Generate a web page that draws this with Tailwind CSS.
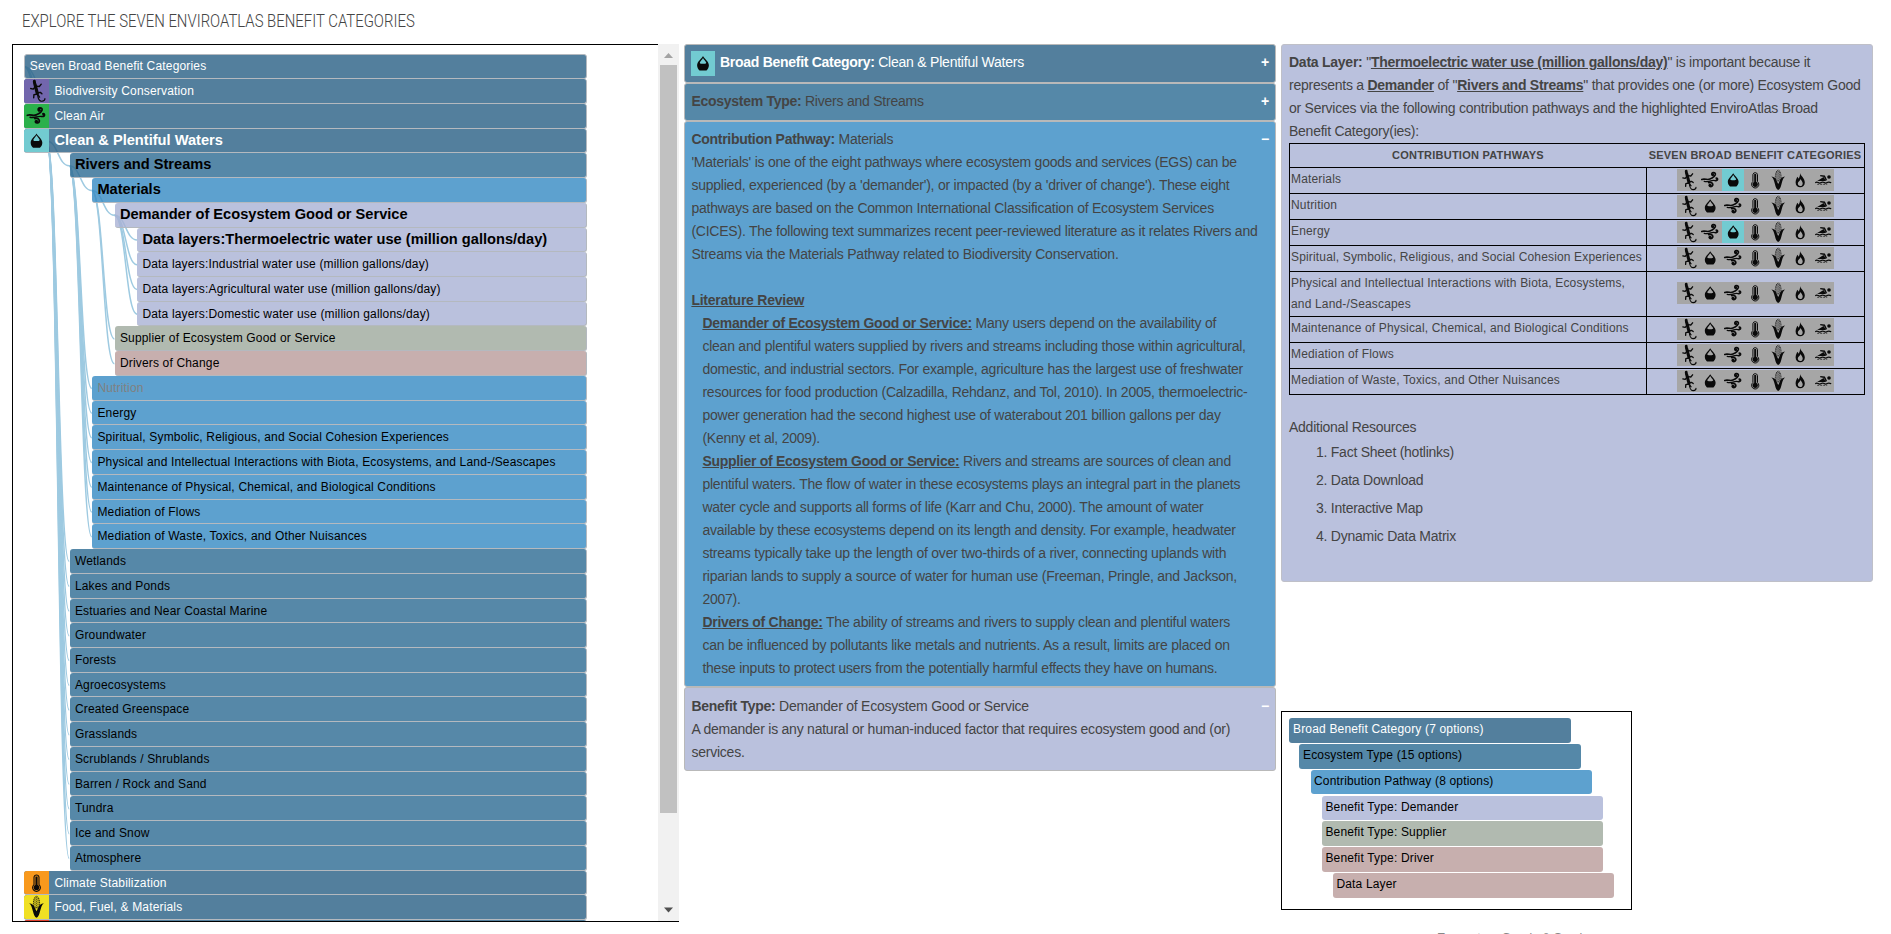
<!DOCTYPE html>
<html lang="en">
<head>
<meta charset="utf-8">
<title>EnviroAtlas Benefit Categories</title>
<script src="https://cdn.jsdelivr.net/npm/@tailwindcss/browser@4"></script>
</head>
<body class="bg-white w-[1891px] h-[934px] overflow-hidden font-['Liberation_Sans',Arial,sans-serif] text-[#444]">

<svg class="hidden">
  <symbol id="lizard" viewBox="0 0 22 22">
    <g fill="none" stroke="#0a0a0a" stroke-linecap="round" stroke-linejoin="round">
      <path d="M9 2.2L9.2 3.8" stroke-width="2.8"/>
      <path d="M9.6 5L11.8 13.5" stroke-width="3"/>
      <path d="M12 14.5C12.4 18 13.4 20.8 16 20.6C18 20.4 18.9 19.4 18.8 18.2" stroke-width="1.1"/>
      <path d="M10.5 6.6L13.6 7L15.4 4.8M9.6 7.4L8 9.4L5.6 8.8M12 12.6L14.6 12.4L16 13.6M11.4 14L8.6 14.6L8.4 17.4M12.6 15L13.8 16.8" stroke-width="1.3"/>
    </g>
  </symbol>
  <symbol id="wind" viewBox="0 0 22 22">
    <g fill="none" stroke="#0a0a0a" stroke-linecap="round">
      <path d="M2.5 10.5C6 9 9 12.2 12.5 9.2C16.5 7 17.6 4 14.2 3.6C12.8 3.6 12 5 13 6" stroke-width="1.6"/>
      <path d="M5 12.3C9 13.6 12 10.6 15.8 11.6C19.6 12.6 19 8 16.8 9" stroke-width="1.3"/>
      <path d="M9.5 13.6C13.8 12.6 15 16.8 12 17.6C9.8 17.8 9.4 15.8 10.8 15.6" stroke-width="1.6"/>
    </g>
    <circle cx="13.6" cy="5.8" r="1.4" fill="#0a0a0a"/><circle cx="17.5" cy="10" r="1.1" fill="#0a0a0a"/><circle cx="11.2" cy="16.3" r="1.4" fill="#0a0a0a"/>
  </symbol>
  <symbol id="drop" viewBox="0 0 22 22">
    <path fill="#0a0a0a" fill-rule="evenodd" d="M11 4.2C12 6.4 16.4 9.3 16.4 12.7C16.4 14.8 15.4 16.3 14.2 17.4H7.8C6.6 16.3 5.6 14.8 5.6 12.7C5.6 9.3 10 6.4 11 4.2ZM11 5.9C10.4 7.2 8.6 8.9 8 10.2C8.3 11.3 9.6 11.2 11 11.2C12.4 11.2 13.7 11.3 14 10.2C13.4 8.9 11.6 7.2 11 5.9Z"/>
  </symbol>
  <symbol id="therm" viewBox="0 0 22 22">
    <path d="M8.7 5.4A2.4 2.4 0 0 1 13.3 5.4V12.6A3.6 3.6 0 1 1 8.7 12.6Z" fill="none" stroke="#0a0a0a" stroke-width="1"/>
    <path d="M11 5V14" stroke="#0a0a0a" stroke-width="2"/><circle cx="11" cy="15.3" r="2.6" fill="#0a0a0a"/>
  </symbol>
  <symbol id="corn" viewBox="0 0 22 22">
    <path d="M8.3 12C7.6 6 8.8 1.2 11 1.2S14.4 6 13.7 12Z" fill="#0a0a0a" fill-opacity=".15" stroke="#0a0a0a" stroke-width=".7" stroke-dasharray="1.2 .6"/>
    <path d="M11 2V12M9.6 3V11M12.4 3V11" stroke="#0a0a0a" stroke-width=".5" stroke-dasharray="1 .8"/>
    <path fill="#0a0a0a" d="M4.2 7.6C7 8 8.6 9.4 9.4 11.8L11 15L12.6 11.8C13.4 9.4 15 8 17.8 7.6C15.6 9.4 15.2 12 14.3 15C13.6 18 12.6 20.6 11 21C9.4 20.6 8.4 18 7.7 15C6.8 12 6.4 9.4 4.2 7.6Z"/>
  </symbol>
  <symbol id="fire" viewBox="0 0 22 22">
    <path fill="#0a0a0a" fill-rule="evenodd" d="M10.8 4C11.2 6.6 15.6 9.2 15.6 13.4C15.6 16.2 13.6 18.2 11 18.2S6.4 16.2 6.4 13.4C6.4 11 7.6 9.4 8 7.8C8.8 8.4 9.2 9 9.3 9.8C10.4 8.4 11 6.2 10.8 4ZM11.4 10C11 11.6 8.6 12.8 8.6 14.6C8.6 16 9.6 17 11 17S13.5 16 13.5 14.4C13.5 12.6 11.8 11.6 11.4 10Z"/>
  </symbol>
  <symbol id="swim" viewBox="0 0 22 22">
    <circle cx="16.8" cy="8" r="1.8" fill="#0a0a0a"/>
    <path d="M8 6.6L12.2 7.2L14.2 11.4" fill="none" stroke="#0a0a0a" stroke-width="1.4"/>
    <path d="M5 12L11.4 8L13.8 12Z" fill="#0a0a0a"/>
    <path d="M3 13.8Q4.5 12.6 6 13.6T9 13.6T12 13.6T15 13.6T19 13.8" fill="none" stroke="#0a0a0a" stroke-width="1.2"/>
    <path d="M5 15.3H15" stroke="#0a0a0a" stroke-width=".7" stroke-dasharray="2 1"/>
  </symbol>
</svg>

<header class="h-[44px] pl-[22px] pt-[9px]">
  <h1 class="w-max origin-left scale-x-[0.852] whitespace-nowrap font-['Roboto'] font-light text-[17.5px] leading-6">EXPLORE THE SEVEN ENVIROATLAS BENEFIT CATEGORIES</h1>
</header>

<main class="flex items-start pl-[12px]">

  <!-- Tree of categories -->
  <section class="flex w-[667px] h-[878px] border-b border-black">
    <div class="relative w-[646px] h-[877px] overflow-hidden border-t border-l border-black pl-[11px] pt-[9.4px]">
      <svg id="links" class="absolute left-[-13px] top-[-45px] w-[640px] h-[960px]" fill="none" stroke="#9ecae1" stroke-width="1.5"></svg>
      <div id="tree" class="relative flex flex-col w-[563px]"></div>
    </div>
    <div class="flex flex-col items-center w-[21px] h-[877px] bg-[#f1f1f1]">
      <svg class="w-[21px] h-[21px] shrink-0" viewBox="0 0 21 21"><path d="M6 14L10.5 9L15 14Z" fill="#a3a3a3"/></svg>
      <div class="w-[17px] h-[748px] bg-[#c1c1c1]"></div>
      <svg class="mt-auto w-[21px] h-[21px] shrink-0" viewBox="0 0 21 21"><path d="M6 7.5L10.5 12.5L15 7.5Z" fill="#505050"/></svg>
    </div>
  </section>

  <!-- Selected path details -->
  <section class="ml-[5px] w-[592px] text-[14px] leading-[23px] tracking-[-0.23px]">
    <div class="flex h-[39px] rounded-[3px] border border-[#b9b9b9] bg-[#537f9d] text-white pl-[6.4px] pr-[6px] pt-[6px]">
      <svg class="w-[24px] h-[25px] bg-[#72cbd1] mr-[4.6px]"><use href="#drop"/></svg>
      <p><b class="tracking-[-0.28px]">Broad Benefit Category:</b> Clean &amp; Plentiful Waters</p>
      <b class="ml-auto">+</b>
    </div>
    <div class="flex justify-between h-[38px] rounded-[3px] border border-[#b9b9b9] bg-[#5588a8] pl-[6.4px] pr-[6px] pt-[6px]">
      <p><b class="tracking-[-0.28px]">Ecosystem Type:</b> Rivers and Streams</p><b class="text-white">+</b>
    </div>
    <div class="h-[566px] rounded-[3px] border border-[#b9b9b9] bg-[#5da1cf] pl-[6.4px] pr-[6px] pt-[6px] whitespace-nowrap">
      <div class="flex justify-between"><p><b class="tracking-[-0.28px]">Contribution Pathway:</b> Materials</p><b class="text-white">−</b></div>
      <p>'Materials' is one of the eight pathways where ecosystem goods and services (EGS) can be<br>supplied, experienced (by a 'demander'), or impacted (by a 'driver of change'). These eight<br>pathways are based on the Common International Classification of Ecosystem Services<br>(CICES). The following text summarizes recent peer-reviewed literature as it relates Rivers and<br>Streams via the Materials Pathway related to Biodiversity Conservation.</p>
      <p class="mt-[23px] font-bold underline">Literature Review</p>
      <div class="pl-[11px]">
        <p><b class="underline tracking-[-0.28px]">Demander of Ecosystem Good or Service:</b> Many users depend on the availability of<br>clean and plentiful waters supplied by rivers and streams including those within agricultural,<br>domestic, and industrial sectors. For example, agriculture has the largest use of freshwater<br>resources for food production (Calzadilla, Rehdanz, and Tol, 2010). In 2005, thermoelectric-<br>power generation had the second highest use of waterabout 201 billion gallons per day<br>(Kenny et al, 2009).</p>
        <p><b class="underline tracking-[-0.28px]">Supplier of Ecosystem Good or Service:</b> Rivers and streams are sources of clean and<br>plentiful waters. The flow of water in these ecosystems plays an integral part in the planets<br>water cycle and supports all forms of life (Karr and Chu, 2000). The amount of water<br>available by these ecosystems depend on its length and density. For example, headwater<br>streams typically take up the length of over two-thirds of a river, connecting uplands with<br>riparian lands to supply a source of water for human use (Freeman, Pringle, and Jackson,<br>2007).</p>
        <p><b class="underline tracking-[-0.28px]">Drivers of Change:</b> The ability of streams and rivers to supply clean and plentiful waters<br>can be influenced by pollutants like metals and nutrients. As a result, limits are placed on<br>these inputs to protect users from the potentially harmful effects they have on humans.</p>
      </div>
    </div>
    <div class="h-[84px] rounded-[3px] border border-[#b9b9b9] bg-[#bac1dd] pl-[6.4px] pr-[6px] pt-[7px]">
      <div class="flex justify-between"><p><b class="tracking-[-0.28px]">Benefit Type:</b> Demander of Ecosystem Good or Service</p><b class="text-white">−</b></div>
      <p>A demander is any natural or human-induced factor that requires ecosystem good and (or)<br>services.</p>
    </div>
  </section>

  <div class="ml-[5px] w-[592px]">
    <!-- Data layer -->
    <section class="h-[538px] rounded-[3px] border border-[#bfc0c8] bg-[#bac1dd] px-[7px] pt-[6px] text-[14px] leading-[23px] tracking-[-0.25px] whitespace-nowrap">
      <p><b>Data Layer:</b> "<b class="underline">Thermoelectric water use (million gallons/day)</b>" is important because it<br>represents a <b class="underline">Demander</b> of "<b class="underline">Rivers and Streams</b>" that provides one (or more) Ecosystem Good<br>or Services via the following contribution pathways and the highlighted EnviroAtlas Broad<br>Benefit Category(ies):</p>
      <div id="pathways" class="w-[576px] border border-black text-[12px] leading-[21px] tracking-[0.16px]">
        <div class="flex h-[23px] font-bold text-[11px] leading-[23px] tracking-[0.23px]">
          <div class="w-[356px] text-center">CONTRIBUTION PATHWAYS</div>
          <div class="w-[218px] text-center">SEVEN BROAD BENEFIT CATEGORIES</div>
        </div>
      </div>
      <p class="mt-[21px]">Additional Resources</p>
      <ol class="flex flex-col gap-[5px] mt-[2px] pl-[27px]">
        <li>1. Fact Sheet (hotlinks)</li><li>2. Data Download</li><li>3. Interactive Map</li><li>4. Dynamic Data Matrix</li>
      </ol>
    </section>

    <!-- Legend -->
    <section class="mt-[129px] w-[351px] h-[199px] border border-black pl-[7px] pt-[6px] flex flex-col gap-[1px] text-[12px] leading-[22px] tracking-[0.17px] text-black">
      <div class="w-[282px] h-[25px] rounded-[3px] bg-[#537f9d] pl-[4px] text-white">Broad Benefit Category (7 options)</div>
      <div class="ml-[10px] w-[282px] h-[25px] rounded-[3px] bg-[#5588a8] pl-[4px]">Ecosystem Type (15 options)</div>
      <div class="ml-[22px] w-[281px] h-[24px] rounded-[3px] bg-[#5da1cf] pl-[3px]">Contribution Pathway (8 options)</div>
      <div class="mt-[1px] ml-[33px] w-[281px] h-[24px] rounded-[3px] bg-[#bac1dd] pl-[3.4px]">Benefit Type: Demander</div>
      <div class="ml-[33px] w-[281px] h-[25px] rounded-[3px] bg-[#b1bab0] pl-[3.4px]">Benefit Type: Supplier</div>
      <div class="ml-[33px] w-[281px] h-[25px] rounded-[3px] bg-[#c7afae] pl-[3.4px]">Benefit Type: Driver</div>
      <div class="ml-[44px] w-[281px] h-[25px] rounded-[3px] bg-[#c7afae] pl-[3.4px]">Data Layer</div>
    </section>
    <p class="mt-[19px] ml-[156px] text-[12.5px] leading-[18px] text-[#888] whitespace-nowrap">Ecosystem Goods &amp; Services</p>
  </div>
</main>

<script>
const CAT = 'bg-[#285f84]/80 text-white', ECO = 'bg-[#2c6a92]/80 text-black', PATH = 'bg-[#358ac3]/80 text-black',
      DEM = 'bg-[#a9b2d4]/80 text-black', SUP = 'bg-[#b1bab0] text-black', DRV = 'bg-[#c7afae] text-black';
const INDENT = {0: 'ml-0', 1: 'ml-0', 2: 'ml-[45.5px]', 3: 'ml-[68px]', 4: 'ml-[90.5px]', 5: 'ml-[113px]'};
// [label, depth, colours, icon, icon background, bold]
const rows = [
  ['Seven Broad Benefit Categories', 0, CAT],
  ['Biodiversity Conservation', 1, CAT, 'lizard', 'bg-[#7266ad]'],
  ['Clean Air', 1, CAT, 'wind', 'bg-[#2bb04b]'],
  ['Clean &amp; Plentiful Waters', 1, CAT, 'drop', 'bg-[#72cbd1]', true],
  ['Rivers and Streams', 2, ECO, '', '', true],
  ['Materials', 3, PATH, '', '', true],
  ['Demander of Ecosystem Good or Service', 4, DEM, '', '', true],
  ['Data layers:Thermoelectric water use (million gallons/day)', 5, DEM, '', '', true],
  ['Data layers:Industrial water use (million gallons/day)', 5, DEM],
  ['Data layers:Agricultural water use (million gallons/day)', 5, DEM],
  ['Data layers:Domestic water use (million gallons/day)', 5, DEM],
  ['Supplier of Ecosystem Good or Service', 4, SUP],
  ['Drivers of Change', 4, DRV],
  ['<span class="text-[#808080]">Nutrition</span>', 3, PATH],
  ['Energy', 3, PATH],
  ['Spiritual, Symbolic, Religious, and Social Cohesion Experiences', 3, PATH],
  ['Physical and Intellectual Interactions with Biota, Ecosystems, and Land-/Seascapes', 3, PATH],
  ['Maintenance of Physical, Chemical, and Biological Conditions', 3, PATH],
  ['Mediation of Flows', 3, PATH],
  ['Mediation of Waste, Toxics, and Other Nuisances', 3, PATH],
  ...['Wetlands', 'Lakes and Ponds', 'Estuaries and Near Coastal Marine', 'Groundwater', 'Forests', 'Agroecosystems',
      'Created Greenspace', 'Grasslands', 'Scrublands / Shrublands', 'Barren / Rock and Sand', 'Tundra', 'Ice and Snow',
      'Atmosphere'].map(n => [n, 2, ECO]),
  ['Climate Stabilization', 1, CAT, 'therm', 'bg-[#f8991d]'],
  ['Food, Fuel, &amp; Materials', 1, CAT, 'corn', 'bg-[#f0e024]'],
  ['', 1, CAT, 'fire', 'bg-[#e0402f]'],
];
const H = 24.74, TOP = 54.4, LEFT = 24;
document.getElementById('tree').innerHTML = rows.map(([t, d, c, icon, bg, bold], i) => {
  const ic = icon ? `<svg viewBox="0 0 22 22" class="w-[25px] h-full shrink-0 ${bg}"><use href="#${icon}" width="22" height="22"/></svg>` : '';
  const fnt = bold ? 'font-bold text-[14.63px] leading-[22.5px]' : i ? 'text-[12px] tracking-[0.17px] leading-[24.4px]' : 'text-[12px] tracking-[0.17px] leading-[22px]';
  const edge = i ? 'border-b border-r' : 'border';
  return `<div class="${INDENT[d]} ${c} ${edge} flex h-[24.74px] rounded-[3px] border-[#b4b9bf] overflow-hidden whitespace-nowrap">${ic}<span class="${i ? 'pl-[5.4px]' : 'pl-[4.8px]'} ${fnt}">${t}</span></div>`;
}).join('');

// Curved connectors from each node to its parent
const last = [];
document.getElementById('links').innerHTML = rows.map(([, d], i) => {
  const x = LEFT + d * 22.6, y = TOP + (i + .5) * H;
  last[d] = [x, y];
  if (!d) return '';
  const [px, py] = last[d - 1], m = (px + x) / 2;
  return `<path d="M${px} ${py}C${m} ${py} ${m} ${y} ${x} ${y}"/>`;
}).filter((p, i) => i < 33).join('');

const HOT = ['lizard', 'wind', 'drop', 'therm', 'corn', 'fire', 'swim'], COLD = ['lizard', 'drop', 'wind', 'therm', 'corn', 'fire', 'swim'];
const paths = [['Materials', 1], ['Nutrition'], ['Energy', 1], ['Spiritual, Symbolic, Religious, and Social Cohesion Experiences'],
  ['Physical and Intellectual Interactions with Biota, Ecosystems,<br>and Land-/Seascapes'],
  ['Maintenance of Physical, Chemical, and Biological Conditions'], ['Mediation of Flows'], ['Mediation of Waste, Toxics, and Other Nuisances']];
document.getElementById('pathways').innerHTML += paths.map(([t, hot]) => {
  const strip = (hot ? HOT : COLD).map(n =>
    `<svg viewBox="0 0 22 22" class="w-[22.43px] h-[22px] ${hot && n === 'drop' ? 'bg-[#72cbd1]' : ''}"><use href="#${n}" width="22" height="22"/></svg>`).join('');
  const tall = t.includes('<br>');
  return `<div class="flex ${tall ? 'h-[45px]' : 'h-[26px]'} border-t border-black"><div class="w-[357px] pl-[1px] pt-[0.6px] border-r border-black">${t}</div><div class="flex-1 flex items-start justify-center ${tall ? 'pt-[10px]' : 'pt-[1px]'}"><div class="flex bg-[#a6a6a6]">${strip}</div></div></div>`;
}).join('');
</script>
</body>
</html>
